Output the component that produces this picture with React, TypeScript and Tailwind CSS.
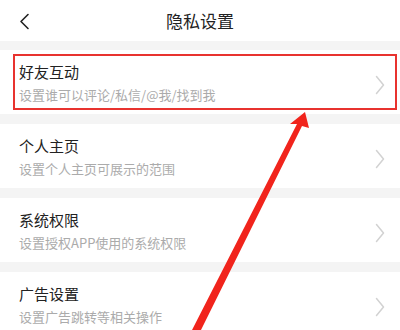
const ITEMS = [
  { title: '好友互动', desc: '设置谁可以评论/私信/@我/找到我' },
  { title: '个人主页', desc: '设置个人主页可展示的范围' },
  { title: '系统权限', desc: '设置授权APP使用的系统权限' },
  { title: '广告设置', desc: '设置广告跳转等相关操作' },
];

export default function App() {
  return (
    <div
      className="relative w-[400px] h-[330px] overflow-hidden bg-[#f4f4f4]"
      style={{ fontFamily: '"Noto Sans CJK SC", "Noto Sans", sans-serif' }}
    >
      {/* Header */}
      <div className="h-[41px] bg-white flex items-center relative">
        <svg className="absolute left-[18px] top-[13px]" width="12" height="17" viewBox="0 0 12 17">
          <polyline points="10,1.5 3,8.5 10,15.5" fill="none" stroke="#222" strokeWidth="1.6" strokeLinecap="round" strokeLinejoin="round" />
        </svg>
        <div className="w-full text-center text-[17px] text-[#222] leading-none">隐私设置</div>
      </div>

      <div className="flex flex-col gap-[10px] pt-[9px]">
        {ITEMS.map((item) => (
          <div key={item.title} className="h-[64px] bg-white flex items-center pl-[19px] pr-[15px]">
            <div className="flex-1 flex flex-col pt-[2px]">
              <div className="text-[15px] leading-[20px] text-[#222]">{item.title}</div>
              <div className="text-[13px] leading-[20px] text-[#ababab] mt-[3px]">{item.desc}</div>
            </div>
            <svg className="mt-[6px]" width="10" height="20" viewBox="0 0 10 20">
              <polyline points="1.5,1.5 8.5,10 1.5,18.5" fill="none" stroke="#d2d2d2" strokeWidth="1.5" strokeLinecap="round" strokeLinejoin="round" />
            </svg>
          </div>
        ))}
      </div>

      {/* Highlight box */}
      <div className="absolute left-[13px] top-[54px] w-[384px] h-[56px] border-2 border-[#e8332f] pointer-events-none" />

      {/* Arrow */}
      <svg className="absolute inset-0 pointer-events-none" width="400" height="330" viewBox="0 0 400 330">
        <polygon
          points="191,332 200,332 302,126 309,128 305,112 290,124 297,124"
          fill="#f1241c"
        />
      </svg>
    </div>
  );
}
